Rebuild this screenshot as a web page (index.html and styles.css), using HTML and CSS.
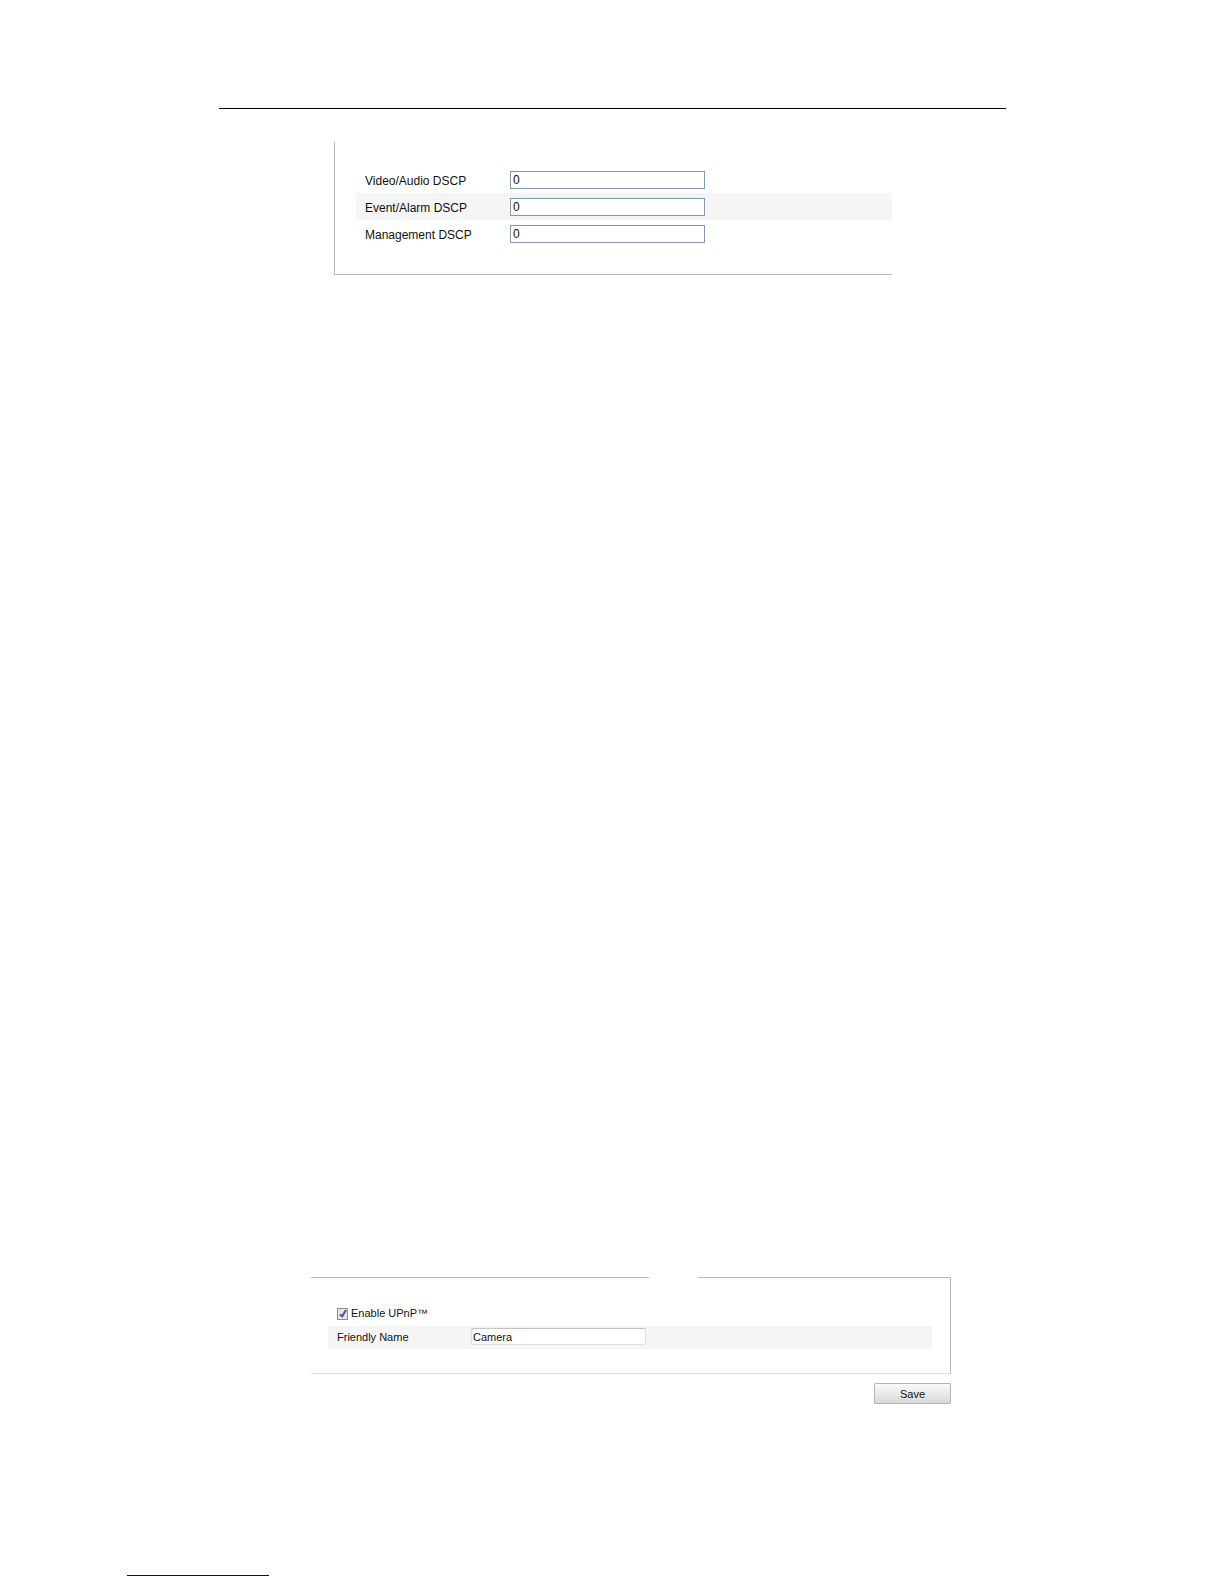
FILE: index.html
```html
<!DOCTYPE html>
<html lang="en">
<head>
<meta charset="utf-8">
<title>Network settings</title>
<link rel="stylesheet" href="styles.css">
</head>
<body>
<hr class="page-rule">
<main class="page-content">
  <form class="dscp-panel">
    <div class="dscp-row">
      <label for="video-dscp">Video/Audio DSCP</label>
      <input id="video-dscp" type="text" value="0">
    </div>
    <div class="dscp-row shaded">
      <label for="event-dscp">Event/Alarm DSCP</label>
      <input id="event-dscp" type="text" value="0">
    </div>
    <div class="dscp-row">
      <label for="management-dscp">Management DSCP</label>
      <input id="management-dscp" type="text" value="0">
    </div>
  </form>

  <form class="upnp-form">
    <div class="upnp-top"><span class="line"></span><span class="line line-end"></span></div>
    <div class="upnp-panel">
      <div class="check-row">
        <input id="enable-upnp" type="checkbox" checked>
        <label for="enable-upnp">Enable UPnP™</label>
      </div>
      <div class="name-row shaded">
        <label for="friendly-name">Friendly Name</label>
        <input id="friendly-name" type="text" value="Camera">
      </div>
    </div>
    <button class="save" type="button">Save</button>
  </form>
</main>
<hr class="footer-rule">
</body>
</html>
```

FILE: styles.css
```css
* {
  box-sizing: border-box;
}

body {
  display: flex;
  flex-direction: column;
  min-height: 100vh;
  margin: 0;
  padding: 108px 0 8px;
  background: #fff;
  color: #111;
  font-family: "Liberation Sans", Arial, sans-serif;
  font-size: 12px;
  line-height: 16px;
}

.page-rule {
  align-self: stretch;
  height: 1px;
  margin: 0 218px 0 219px;
  border: 0;
  background: #000;
}

.page-content {
  display: flex;
  flex: 1;
  flex-direction: column;
  justify-content: space-between;
}

.shaded {
  background: #f5f5f5;
}

.dscp-panel {
  margin: 33px 332px 0 334px;
  padding: 24px 0 27px 21px;
  border-left: 1px solid #b9b9b9;
  border-bottom: 1px solid #b9b9b9;
}

.dscp-row {
  display: grid;
  grid-template-columns: 145px 195px;
  align-items: center;
  height: 27px;
  padding-left: 9px;
}

.dscp-row label {
  padding-top: 2px;
}

.dscp-row input {
  width: 100%;
  height: 18px;
  padding: 0 2px;
  border: 1px solid #8299b5;
  background: #fff;
  color: inherit;
  font: inherit;
}

.upnp-form {
  display: flex;
  flex-direction: column;
  margin: 0 273px 171px 311px;
  font-size: 11px;
}

.upnp-top {
  display: flex;
  gap: 49px;
}

.line {
  flex: 4;
  height: 1px;
  background: #b9b9b9;
}

.line-end {
  flex: 3;
}

.upnp-panel {
  padding: 25px 18px 24px 17px;
  border-right: 1px solid #b9b9b9;
  border-bottom: 1px solid #dcdcdc;
}

.check-row {
  display: flex;
  align-items: center;
  gap: 3px;
  height: 23px;
  padding: 0 0 4px 9px;
}

.check-row input {
  appearance: none;
  width: 11px;
  height: 12px;
  margin: 2px 0 0;
  border: 1px solid #8a8f96;
  background: #e3e5e9;
}

.check-row input:checked::before {
  content: "";
  display: block;
  width: 2px;
  height: 6px;
  margin: 0 0 0 3px;
  border: solid #4a569c;
  border-width: 0 2px 2px 0;
  box-sizing: content-box;
  transform: rotate(32deg);
}

.name-row {
  display: grid;
  grid-template-columns: 134px 175px;
  align-items: center;
  height: 23px;
  padding: 0 0 2px 9px;
}

.name-row input {
  width: 100%;
  height: 17px;
  padding: 0 1px;
  border: 1px solid #dedede;
  border-top-color: #c4c4c4;
  border-radius: 2px;
  background: #fff;
  color: inherit;
  font: inherit;
}

.save {
  align-self: flex-end;
  width: 77px;
  height: 21px;
  margin-top: 9px;
  padding: 0;
  border: 1px solid #b5b5b5;
  border-radius: 1px;
  background: linear-gradient(#fafafa, #d9d9d9);
  color: inherit;
  font: inherit;
}

.footer-rule {
  width: 142px;
  height: 1px;
  margin: 0 0 0 127px;
  border: 0;
  background: #00008b;
}
```
